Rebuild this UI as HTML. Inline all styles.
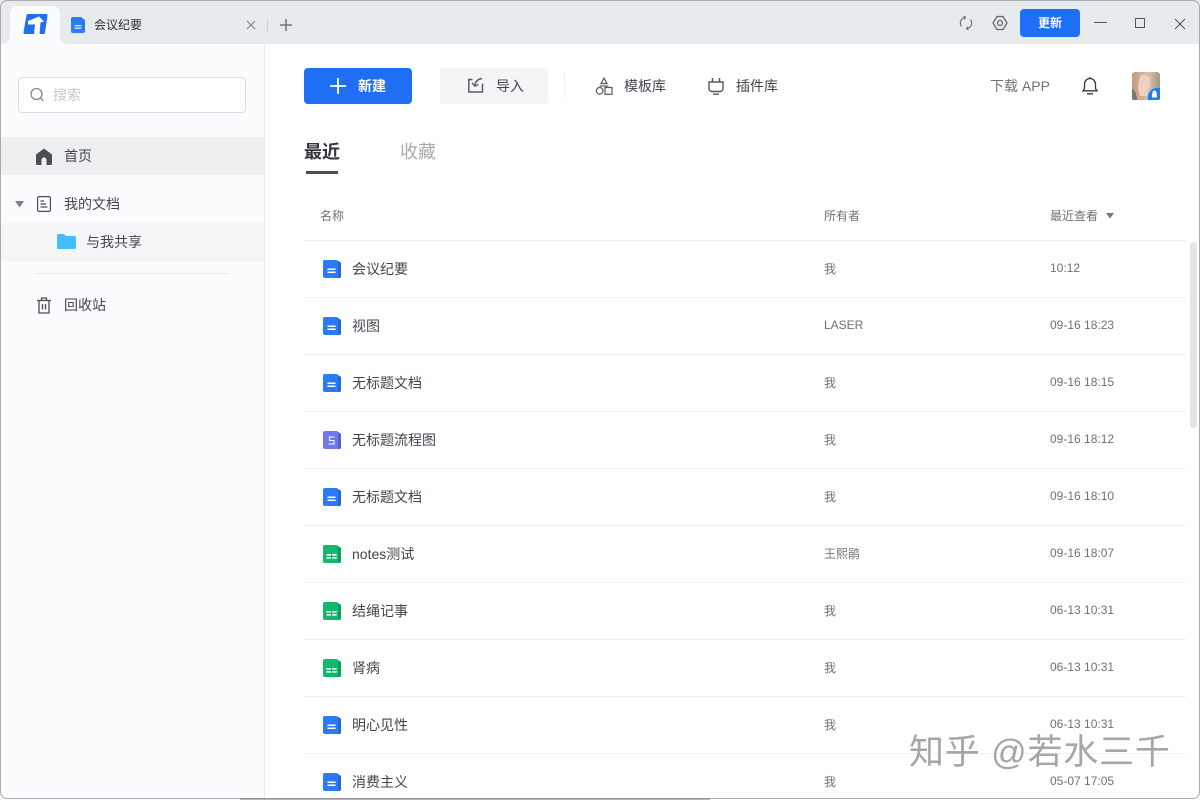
<!DOCTYPE html>
<html lang="zh"><head><meta charset="utf-8"><title>会议纪要</title>
<style>
*{box-sizing:border-box}
html,body{margin:0;padding:0;width:1200px;height:800px;overflow:hidden;background:#fff}
body{font-family:"Liberation Sans","Noto Sans CJK SC",sans-serif;color:#41464b;position:relative}
.a{position:absolute;white-space:nowrap}
.t14{font-size:14px;line-height:20px;color:#41464b}
.t12{font-size:12px;line-height:16px;color:#6d7278}
.line{position:absolute;left:304px;width:882px;height:1px;background:#edeef0}
svg{position:absolute;display:block}
</style></head><body>
<svg width="0" height="0" style="position:absolute"><defs>
<symbol id="doc" viewBox="0 0 18 18"><path d="M2 0H13.500L18 3V16a2 2 0 0 1-2 2H2a2 2 0 0 1-2-2V2a2 2 0 0 1 2-2Z" fill="#2a7bf5"/><path d="M13.500 0L18 3V16a2 2 0 0 1-2 2H15V1.500Z" fill="#2767d8"/><path d="M4.500 8.500h8v1.500h-8zM4.500 11.500h8v1.500h-8z" fill="#fff"/></symbol>
<symbol id="sheet" viewBox="0 0 18 18"><path d="M2 0H13.500L18 3V16a2 2 0 0 1-2 2H2a2 2 0 0 1-2-2V2a2 2 0 0 1 2-2Z" fill="#14b86c"/><path d="M13.500 0L18 3V16a2 2 0 0 1-2 2H15V1.500Z" fill="#10a05e"/><path d="M3.500 9h4.500v1.600H3.500zM9.200 9h4.500v1.600H9.200zM3.500 12h4.500v1.600H3.500zM9.200 12h4.500v1.600H9.200z" fill="#fff"/></symbol>
<symbol id="flow" viewBox="0 0 18 18"><path d="M2 0H13.500L18 3V16a2 2 0 0 1-2 2H2a2 2 0 0 1-2-2V2a2 2 0 0 1 2-2Z" fill="#6f7bec"/><path d="M13.500 0L18 3V16a2 2 0 0 1-2 2H15V1.500Z" fill="#5560cf"/><path d="M11.500 6H6.500V9.500H11V13H5.500" stroke="#fff" stroke-width="1.100" fill="none"/></symbol>
</defs></svg>

<!-- title bar -->
<div class="a" style="left:0;top:0;width:1200px;height:44px;background:#e8ebee"></div>
<div class="a" style="left:884px;top:0;width:84px;height:1px;background:#4a6f9c"></div>
<svg style="left:0;top:4px" width="72" height="40" viewBox="0 0 72 40"><path d="M2 40C8 40 10 36 10 30V10C10 5 13 2 18 2H52C57 2 60 5 60 10V32C60 37 63 40 68 40Z" fill="#fbfcfd"/></svg>
<svg style="left:23px;top:14px" width="25" height="21" viewBox="0 0 25 21"><path d="M5 0H23A1.500 1.500 0 0 1 24.500 1.700L22 18.700A1.500 1.500 0 0 1 20.500 20H2A1.500 1.500 0 0 1 .5 18.300L3.500 1.300A1.500 1.500 0 0 1 5 0Z" fill="#1f6ff2"/><path d="M5 7L16 2.500L21 7.500L17.500 8.500L16.500 20H11L12 10.500H5Z" fill="#fff"/></svg>
<svg style="left:71px;top:17px" width="14" height="16" viewBox="0 0 14 16"><path d="M2 0H10L14 3V14a2 2 0 0 1-2 2H2a2 2 0 0 1-2-2V2a2 2 0 0 1 2-2Z" fill="#2a7bf5"/><path d="M3.500 8h7v1.200h-7zM3.500 10.500h7v1.200h-7z" fill="#dcebff"/></svg>
<div class="a" style="left:94px;top:15px;font-size:12px;line-height:20px;color:#2c2f33">会议纪要</div>
<svg style="left:246px;top:20px" width="10" height="10" viewBox="0 0 10 10"><path d="M1 1L9 9M9 1L1 9" stroke="#85898e" stroke-width="1.200"/></svg>
<div class="a" style="left:267px;top:19px;width:1px;height:14px;background:#cfd2d6"></div>
<svg style="left:279px;top:18px" width="14" height="14" viewBox="0 0 14 14"><path d="M7 1V13M1 7H13" stroke="#73777c" stroke-width="1.500"/></svg>
<svg style="left:958px;top:15px" width="16" height="16" viewBox="0 0 16 16" fill="none" stroke="#73777c" stroke-width="1.200"><path d="M3.500 11.500A5.800 5.800 0 0 1 5 3.200L7.500 2.300"/><path d="M12.500 4.500A5.800 5.800 0 0 1 11 12.800L8.500 13.700"/><path d="M5.500 1L7.500 2.300 6.200 4.300M10.500 15L8.500 13.700 9.800 11.700"/></svg>
<svg style="left:992px;top:15px" width="16" height="16" viewBox="0 0 16 16" fill="none" stroke="#5f6368" stroke-width="1.200"><path d="M5 1.500H11L15 8 11 14.500H5L1 8Z" stroke-linejoin="round"/><circle cx="8" cy="8" r="2.500"/></svg>
<div class="a" style="left:1020px;top:9px;width:60px;height:28px;background:#1f6ff6;border-radius:4px;color:#fff;font-size:12px;line-height:28px;text-align:center;font-weight:bold">更新</div>
<div class="a" style="left:1094px;top:22px;width:13px;height:1px;background:#55595e"></div>
<div class="a" style="left:1135px;top:18px;width:10px;height:10px;border:1px solid #55595e"></div>
<svg style="left:1174px;top:18px" width="12" height="12" viewBox="0 0 12 12"><path d="M1 1L11 11M11 1L1 11" stroke="#55595e" stroke-width="1.100"/></svg>

<!-- sidebar -->
<div class="a" style="left:0;top:44px;width:265px;height:756px;background:#fbfcfd;border-right:1px solid #e8e9eb"></div>
<div class="a" style="left:18px;top:77px;width:228px;height:36px;background:#fff;border:1px solid #dcdee1;border-radius:4px"></div>
<svg style="left:30px;top:87px" width="15" height="16" viewBox="0 0 15 16" fill="none" stroke="#85898e" stroke-width="1.300"><circle cx="6.500" cy="7" r="5.500"/><path d="M10.500 11L13.500 14"/></svg>
<div class="a" style="left:53px;top:85px;font-size:14px;line-height:20px;color:#c6c8cb">搜索</div>
<div class="a" style="left:0;top:137px;width:264px;height:38px;background:#eceef0"></div>
<svg style="left:35px;top:148px" width="18" height="17" viewBox="0 0 18 17"><path d="M9 0.500L17 6.500V15.500A1.500 1.500 0 0 1 15.500 17H11.500V12A2.500 2.500 0 0 0 6.500 12V17H2.500A1.500 1.500 0 0 1 1 15.500V6.500Z" fill="#4a4e55"/></svg>
<div class="a t14" style="left:64px;top:146px">首页</div>
<svg style="left:15px;top:201px" width="10" height="7" viewBox="0 0 10 7"><path d="M0 0H9L4.500 6.500Z" fill="#7b7f84"/></svg>
<svg style="left:37px;top:196px" width="14" height="16" viewBox="0 0 14 16" fill="none" stroke="#4a4e55" stroke-width="1.200"><rect x=".6" y=".6" width="12.800" height="14.800" rx="1.500"/><path d="M3.500 5H7M3.500 8H9M3.500 11H10.500"/></svg>
<div class="a t14" style="left:64px;top:194px">我的文档</div>
<div class="a" style="left:0;top:223px;width:264px;height:38px;background:#f5f6f7"></div>
<svg style="left:57px;top:234px" width="19" height="15" viewBox="0 0 19 15"><path d="M1.500 0H7L9 2H17.500A1.500 1.500 0 0 1 19 3.500V13.500A1.500 1.500 0 0 1 17.500 15H1.500A1.500 1.500 0 0 1 0 13.500V1.500A1.500 1.500 0 0 1 1.500 0Z" fill="#46bdfb"/></svg>
<div class="a t14" style="left:86px;top:232px">与我共享</div>
<div class="a" style="left:36px;top:273px;width:192px;height:1px;background:#e6e7e9"></div>
<svg style="left:36px;top:297px" width="16" height="17" viewBox="0 0 16 17" fill="none" stroke="#4a4e55" stroke-width="1.300"><path d="M1 3.500H15M5.500 3.500V1H10.500V3.500M3 3.500V16H13V3.500M6.500 7V12.500M9.500 7V12.500"/></svg>
<div class="a t14" style="left:64px;top:295px">回收站</div>

<!-- toolbar -->
<div class="a" style="left:304px;top:68px;width:108px;height:36px;background:#1f6ff6;border-radius:4px"></div>
<svg style="left:330px;top:78px" width="16" height="16" viewBox="0 0 16 16"><path d="M8 0V16M0 8H16" stroke="#fff" stroke-width="1.800"/></svg>
<div class="a" style="left:358px;top:76px;font-size:14px;line-height:20px;color:#fff;font-weight:bold">新建</div>
<div class="a" style="left:440px;top:68px;width:108px;height:36px;background:#f4f5f6;border-radius:4px"></div>
<svg style="left:467px;top:77px" width="17" height="17" viewBox="0 0 17 17" fill="none" stroke="#5a5e63" stroke-width="1.500"><path d="M5.500 2.500H1.800V15H15.500V6.500"/><path d="M15 1.500C11 2 8.500 4 7.800 8.500"/><path d="M5 5.800L7.800 9.200 11.500 7.500" stroke-width="1.400"/></svg>
<div class="a t14" style="left:496px;top:76px">导入</div>
<div class="a" style="left:564px;top:73px;width:1px;height:25px;background:#eceef0"></div>
<svg style="left:595px;top:77px" width="18" height="18" viewBox="0 0 18 18" fill="none" stroke="#55595e" stroke-width="1.200"><path d="M9 1L12 6.500H6Z"/><path d="M4.500 9H13.500"/><circle cx="4.700" cy="13.800" r="3.300"/><rect x="10" y="10.500" width="7" height="6.800"/></svg>
<div class="a t14" style="left:624px;top:76px">模板库</div>
<svg style="left:707px;top:77px" width="18" height="18" viewBox="0 0 18 18" fill="none" stroke="#55595e" stroke-width="1.400"><path d="M2 5H16V11.500A3 3 0 0 1 13 14.500H5A3 3 0 0 1 2 11.500Z"/><path d="M5.500 1V5M12.500 1V5M6 17.200H12"/></svg>
<div class="a t14" style="left:736px;top:76px">插件库</div>
<div class="a" style="left:990px;top:76px;font-size:14px;line-height:20px;color:#6d7278">下载 APP</div>
<svg style="left:1082px;top:77px" width="16" height="18" viewBox="0 0 16 18" fill="none" stroke="#33363a" stroke-width="1.300"><path d="M1 13.800H15L13.500 11.500V7A5.500 5.500 0 0 0 2.500 7V11.500Z"/><path d="M8 1V0M5 16.800H11"/></svg>
<svg style="left:1132px;top:72px" width="28" height="28" viewBox="0 0 28 28"><defs><linearGradient id="g" x1="0" y1="0" x2="1" y2="0"><stop offset="0" stop-color="#c39a80"/><stop offset=".6" stop-color="#d9c1ac"/><stop offset="1" stop-color="#a3987f"/></linearGradient></defs><rect width="28" height="28" rx="3" fill="url(#g)"/><path d="M9 3Q19 2 18 12L15 24H8Q4 12 9 3Z" fill="#ecd0c0"/><path d="M0 16Q5 20 5 28H2Q0 28 0 26Z" fill="#7d7568"/><path d="M16 28A10 10 0 0 1 28 16V26A2 2 0 0 1 26 28Z" fill="#1f7cf0"/><path d="M20 25.500C20 20 21 18.500 22.500 18.500S25 20 25 25.500Z" fill="#fff"/></svg>

<!-- tabs -->
<div class="a" style="left:304px;top:140px;font-size:18px;line-height:25px;font-weight:bold;color:#33363a">最近</div>
<div class="a" style="left:306px;top:171px;width:32px;height:3px;background:#4a4d52"></div>
<div class="a" style="left:400px;top:140px;font-size:18px;line-height:25px;color:#a9abae">收藏</div>

<!-- table header -->
<div class="a t12" style="left:320px;top:208px">名称</div>
<div class="a t12" style="left:824px;top:208px">所有者</div>
<div class="a t12" style="left:1050px;top:208px">最近查看</div>
<svg style="left:1106px;top:213px" width="8" height="6" viewBox="0 0 8 6"><path d="M0 0H8L4 5.500Z" fill="#74787d"/></svg>

<div class="line" style="top:240px"></div><div class="line" style="top:297px"></div><div class="line" style="top:354px"></div><div class="line" style="top:411px"></div><div class="line" style="top:468px"></div><div class="line" style="top:525px"></div><div class="line" style="top:582px"></div><div class="line" style="top:639px"></div><div class="line" style="top:696px"></div><div class="line" style="top:753px"></div>

<svg style="left:323px;top:260px" width="18" height="18"><use href="#doc"/></svg><div class="a t14" style="left:352px;top:259px">会议纪要</div><div class="a t12" style="left:824px;top:261px">我</div><div class="a t12" style="left:1050px;top:260px">10:12</div>
<svg style="left:323px;top:317px" width="18" height="18"><use href="#doc"/></svg><div class="a t14" style="left:352px;top:316px">视图</div><div class="a t12" style="left:824px;top:317px">LASER</div><div class="a t12" style="left:1050px;top:317px">09-16 18:23</div>
<svg style="left:323px;top:374px" width="18" height="18"><use href="#doc"/></svg><div class="a t14" style="left:352px;top:373px">无标题文档</div><div class="a t12" style="left:824px;top:375px">我</div><div class="a t12" style="left:1050px;top:374px">09-16 18:15</div>
<svg style="left:323px;top:431px" width="18" height="18"><use href="#flow"/></svg><div class="a t14" style="left:352px;top:430px">无标题流程图</div><div class="a t12" style="left:824px;top:432px">我</div><div class="a t12" style="left:1050px;top:431px">09-16 18:12</div>
<svg style="left:323px;top:488px" width="18" height="18"><use href="#doc"/></svg><div class="a t14" style="left:352px;top:487px">无标题文档</div><div class="a t12" style="left:824px;top:489px">我</div><div class="a t12" style="left:1050px;top:488px">09-16 18:10</div>
<svg style="left:323px;top:545px" width="18" height="18"><use href="#sheet"/></svg><div class="a t14" style="left:352px;top:544px">notes测试</div><div class="a t12" style="left:824px;top:546px">王熙鹃</div><div class="a t12" style="left:1050px;top:545px">09-16 18:07</div>
<svg style="left:323px;top:602px" width="18" height="18"><use href="#sheet"/></svg><div class="a t14" style="left:352px;top:601px">结绳记事</div><div class="a t12" style="left:824px;top:603px">我</div><div class="a t12" style="left:1050px;top:602px">06-13 10:31</div>
<svg style="left:323px;top:659px" width="18" height="18"><use href="#sheet"/></svg><div class="a t14" style="left:352px;top:658px">肾病</div><div class="a t12" style="left:824px;top:660px">我</div><div class="a t12" style="left:1050px;top:659px">06-13 10:31</div>
<svg style="left:323px;top:716px" width="18" height="18"><use href="#doc"/></svg><div class="a t14" style="left:352px;top:715px">明心见性</div><div class="a t12" style="left:824px;top:717px">我</div><div class="a t12" style="left:1050px;top:716px">06-13 10:31</div>
<svg style="left:323px;top:773px" width="18" height="18"><use href="#doc"/></svg><div class="a t14" style="left:352px;top:772px">消费主义</div><div class="a t12" style="left:824px;top:774px">我</div><div class="a t12" style="left:1050px;top:773px">05-07 17:05</div>

<!-- scrollbar -->
<div class="a" style="left:1190px;top:242px;width:7px;height:186px;background:#e4e5e7;border-radius:4px"></div>

<!-- window border -->
<div class="a" style="left:0;top:0;width:1200px;height:799px;border:1px solid #a9abae;border-radius:7px;pointer-events:none"></div>
<div class="a" style="left:240px;top:798px;width:470px;height:2px;background:#8a8a8a;opacity:.6"></div>

<!-- watermark -->
<div class="a" style="left:909px;top:733px;font-size:35px;line-height:40px;font-weight:400;color:#a6a6a6;text-shadow:1px 1px 0 #fff;letter-spacing:.8px">知乎 @若水三千</div>
</body></html>
